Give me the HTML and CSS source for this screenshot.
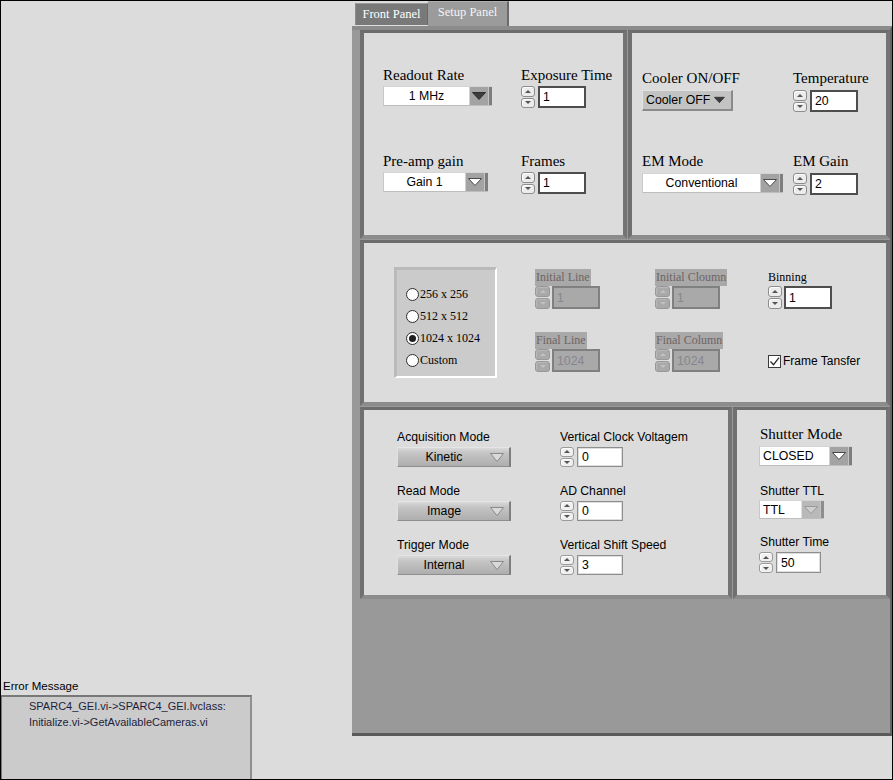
FILE: index.html
```html
<!DOCTYPE html>
<html>
<head>
<meta charset="utf-8">
<title>Setup Panel</title>
<link rel="stylesheet" href="styles.css">
</head>
<body>
<div class="window">
  <div class="left">
    <div class="err-label">Error Message</div>
    <div class="err-box">
      <div>SPARC4_GEI.vi-&gt;SPARC4_GEI.lvclass:</div>
      <div>Initialize.vi-&gt;GetAvailableCameras.vi</div>
    </div>
  </div>

  <div class="tabctl">
    <div class="tabs">
      <div class="tab tab-front">Front Panel</div>
      <div class="tab tab-setup">Setup Panel</div>
    </div>
    <div class="tabbody">
      <div class="prow row1">
        <section class="panel p1">
          <div class="field">
            <div class="lbl-serif">Readout Rate</div>
            <div class="ring w-rate"><span class="rv center">1 MHz</span><span class="rbtn"><svg width="14" height="8" viewBox="0 0 14 8"><path d="M0.5 0.5h13L7 7.5z" fill="#3c3c3c" stroke="#2c2c2c"/></svg></span></div>
          </div>
          <div class="field">
            <div class="lbl-serif">Exposure Time</div>
            <div class="num h22"><span class="spin"><i class="up"></i><i class="dn"></i></span><span class="nbox w48">1</span></div>
          </div>
          <div class="field">
            <div class="lbl-serif">Pre-amp gain</div>
            <div class="ring w-gain"><span class="rv center">Gain 1</span><span class="rbtn"><svg width="14" height="8" viewBox="0 0 14 8"><path d="M0.5 0.5h13L7 7.5z" fill="#fff" stroke="#4a4a4a"/></svg></span></div>
          </div>
          <div class="field">
            <div class="lbl-serif">Frames</div>
            <div class="num h22"><span class="spin"><i class="up"></i><i class="dn"></i></span><span class="nbox w48">1</span></div>
          </div>
        </section>
        <section class="panel p2">
          <div class="field">
            <div class="lbl-serif">Cooler ON/OFF</div>
            <div class="ring-grey"><span class="rv">Cooler OFF</span><svg width="14" height="8" viewBox="0 0 14 8"><path d="M0.5 0.5h13L7 7.5z" fill="#3c3c3c" stroke="#2c2c2c"/></svg></div>
          </div>
          <div class="field">
            <div class="lbl-serif">Temperature</div>
            <div class="num h22"><span class="spin"><i class="up"></i><i class="dn"></i></span><span class="nbox w48">20</span></div>
          </div>
          <div class="field">
            <div class="lbl-serif">EM Mode</div>
            <div class="ring w-em"><span class="rv center">Conventional</span><span class="rbtn"><svg width="14" height="8" viewBox="0 0 14 8"><path d="M0.5 0.5h13L7 7.5z" fill="#fff" stroke="#4a4a4a"/></svg></span></div>
          </div>
          <div class="field">
            <div class="lbl-serif">EM Gain</div>
            <div class="num h22"><span class="spin"><i class="up"></i><i class="dn"></i></span><span class="nbox w48">2</span></div>
          </div>
        </section>
      </div>

      <div class="prow row2">
        <section class="panel p3">
          <div class="radiobox">
            <div class="radio"><span class="rdot"></span>256 x 256</div>
            <div class="radio"><span class="rdot"></span>512 x 512</div>
            <div class="radio"><span class="rdot on"></span>1024 x 1024</div>
            <div class="radio"><span class="rdot"></span>Custom</div>
          </div>
          <div class="p3grid">
            <div class="dfield">
              <div class="dlabel">Initial Line</div>
              <div class="num dis h23"><span class="spin"><i class="up"></i><i class="dn"></i></span><span class="nbox w48">1</span></div>
            </div>
            <div class="dfield">
              <div class="dlabel">Initial Cloumn</div>
              <div class="num dis h23"><span class="spin"><i class="up"></i><i class="dn"></i></span><span class="nbox w48">1</span></div>
            </div>
            <div class="dfield">
              <div class="slabel">Binning</div>
              <div class="num h23 bin"><span class="spin"><i class="up"></i><i class="dn"></i></span><span class="nbox w48">1</span></div>
            </div>
            <div class="dfield">
              <div class="dlabel">Final Line</div>
              <div class="num dis h23"><span class="spin"><i class="up"></i><i class="dn"></i></span><span class="nbox w48">1024</span></div>
            </div>
            <div class="dfield">
              <div class="dlabel">Final Column</div>
              <div class="num dis h23"><span class="spin"><i class="up"></i><i class="dn"></i></span><span class="nbox w48">1024</span></div>
            </div>
            <div class="checkrow">
              <span class="cbox"><svg width="11" height="11" viewBox="0 0 11 11"><path d="M1.5 5.5l3 3.2 5.5-7" fill="none" stroke="#2a2a2a" stroke-width="1.3"/></svg></span>
              <span class="clabel">Frame Tansfer</span>
            </div>
          </div>
        </section>
      </div>

      <div class="prow row3">
        <section class="panel p4">
          <div class="field">
            <div class="lbl-sans">Acquisition Mode</div>
            <div class="sys"><span class="rv center">Kinetic</span><svg width="14" height="9" viewBox="0 0 14 9"><path d="M0.5 0.5h13L7 8.5z" fill="#d9d9d9" stroke="#8a8a8a"/></svg></div>
          </div>
          <div class="field">
            <div class="lbl-sans">Vertical Clock Voltagem</div>
            <div class="num sysnum h20"><span class="spin"><i class="up"></i><i class="dn"></i></span><span class="nbox w46">0</span></div>
          </div>
          <div class="field">
            <div class="lbl-sans">Read Mode</div>
            <div class="sys"><span class="rv center">Image</span><svg width="14" height="9" viewBox="0 0 14 9"><path d="M0.5 0.5h13L7 8.5z" fill="#d9d9d9" stroke="#8a8a8a"/></svg></div>
          </div>
          <div class="field">
            <div class="lbl-sans">AD Channel</div>
            <div class="num sysnum h20"><span class="spin"><i class="up"></i><i class="dn"></i></span><span class="nbox w46">0</span></div>
          </div>
          <div class="field">
            <div class="lbl-sans">Trigger Mode</div>
            <div class="sys"><span class="rv center">Internal</span><svg width="14" height="9" viewBox="0 0 14 9"><path d="M0.5 0.5h13L7 8.5z" fill="#d9d9d9" stroke="#8a8a8a"/></svg></div>
          </div>
          <div class="field">
            <div class="lbl-sans">Vertical Shift Speed</div>
            <div class="num sysnum h20"><span class="spin"><i class="up"></i><i class="dn"></i></span><span class="nbox w46">3</span></div>
          </div>
        </section>
        <section class="panel p5">
          <div class="field f-mode">
            <div class="lbl-serif">Shutter Mode</div>
            <div class="ring w-closed"><span class="rv">CLOSED</span><span class="rbtn"><svg width="14" height="8" viewBox="0 0 14 8"><path d="M0.5 0.5h13L7 7.5z" fill="#fff" stroke="#4a4a4a"/></svg></span></div>
          </div>
          <div class="field f-ttl">
            <div class="lbl-sans">Shutter TTL</div>
            <div class="ring w-ttl"><span class="rv">TTL</span><span class="rbtn light"><svg width="14" height="8" viewBox="0 0 14 8"><path d="M0.5 0.5h13L7 7.5z" fill="#cfcfcf" stroke="#9a9a9a"/></svg></span></div>
          </div>
          <div class="field">
            <div class="lbl-sans">Shutter Time</div>
            <div class="num sysnum h21"><span class="spin"><i class="up"></i><i class="dn"></i></span><span class="nbox w45">50</span></div>
          </div>
        </section>
      </div>
    </div>
  </div>
</div>
</body>
</html>
```

FILE: styles.css
```css
* { box-sizing: border-box; }
html, body { margin: 0; padding: 0; }
body { background: #dcdcdc; }

.window {
  width: 893px;
  height: 780px;
  border: 1px solid #000;
  background: #dcdcdc;
  display: flex;
  overflow: hidden;
  font-family: "Liberation Sans", Arial, sans-serif;
  color: #000;
}

/* ---------- left column / error message ---------- */
.left {
  width: 351px;
  display: flex;
  flex-direction: column;
  justify-content: flex-end;
}
.err-label {
  font-size: 11.5px;
  line-height: 14px;
  padding-left: 2px;
  margin-bottom: 2px;
}
.err-box {
  width: 251px;
  height: 84px;
  background: #cbcbcb;
  border-top: 2px solid #787878;
  border-left: 1px solid #787878;
  border-right: 2px solid #8f8f8f;
  padding: 1px 0 0 27px;
  font-size: 11px;
  line-height: 16px;
  color: #1e1e3c;
  white-space: nowrap;
}

/* ---------- tab control ---------- */
.tabctl {
  width: 540px;
  display: flex;
  flex-direction: column;
}
.tabs {
  height: 25px;
  display: flex;
  align-items: flex-end;
  padding-left: 3px;
}
.tab {
  font-family: "Liberation Serif", "Times New Roman", serif;
  font-size: 12.5px;
  display: flex;
  align-items: center;
  justify-content: center;
  white-space: nowrap;
}
.tab-front {
  width: 73px;
  height: 22px;
  margin-bottom: 1px;
  background: #797979;
  color: #fff;
  border-top: 1px solid #9c9c9c;
  border-left: 1px solid #8c8c8c;
  border-right: 1px solid #6a6a6a;
}
.tab-setup {
  width: 81px;
  height: 25px;
  background: #9b9b9b;
  color: #f4f4f4;
  border-top: 1px solid #b0b0b0;
  border-right: 2px solid #6a6a6a;
  padding-bottom: 4px;
}
.tabbody {
  height: 710px;
  background: #999;
  border-top: 4px solid #8b8b8b;
  border-right: 2px solid #666;
  border-bottom: 3px solid #5a5a5a;
  padding-left: 8px;
  display: flex;
  flex-direction: column;
  gap: 1px;
}

/* ---------- panels ---------- */
.prow { display: flex; gap: 1px; }
.row1 { height: 209px; }
.row2 { height: 166px; }
.row3 { height: 192px; }

.panel {
  background: #dcdcdc;
  border-top: 3px solid #6c6c6c;
  border-left: 4px solid #707070;
  border-right: 4px solid #747474;
  border-bottom: 4px solid #8c8c8c;
}
.p1 { width: 267px; }
.p2 { width: 262px; }
.p3 { width: 530px; }
.p4 { width: 372px; }
.p5 { width: 157px; }

.field {
  display: flex;
  flex-direction: column;
  align-items: flex-start;
  gap: 2px;
}
.lbl-serif {
  font-family: "Liberation Serif", "Times New Roman", serif;
  font-size: 15px;
  line-height: 17px;
  white-space: nowrap;
}
.lbl-sans {
  font-size: 12.2px;
  line-height: 15px;
  white-space: nowrap;
}

.p1 {
  display: grid;
  grid-template-columns: 138px auto;
  row-gap: 45px;
  align-content: start;
  padding: 34px 0 0 19px;
}
.p2 {
  display: grid;
  grid-template-columns: 151px auto;
  row-gap: 41px;
  align-content: start;
  padding: 37px 0 0 10px;
}
.p2 .field { gap: 3px; }

/* ---------- ring / combo controls ---------- */
.ring {
  display: flex;
  height: 20px;
  background: #fff;
  border-top: 1px solid #d4d4d4;
  border-left: 1px solid #c8c8c8;
  border-bottom: 1px solid #bdbdbd;
  font-size: 12.3px;
}
.rv {
  flex: 1;
  display: flex;
  align-items: center;
  padding-left: 3px;
  white-space: nowrap;
}
.rv.center { justify-content: center; padding-left: 0; }
.rbtn {
  width: 23px;
  display: flex;
  align-items: center;
  padding-left: 2px;
  background: #a3a3a3;
  border-left: 1px solid #d0d0d0;
  border-right: 3px solid #7e7e7e;
  box-shadow: inset -1px 0 0 #c4c4c4;
}
.rbtn.light {
  background: #b9b9b9;
  border-left-color: #e0e0e0;
  border-right-color: #8e8e8e;
}
.w-rate { width: 109px; }
.w-gain { width: 105px; }
.w-em { width: 141px; }
.w-closed { width: 93px; }
.w-ttl { width: 65px; height: 19px; }

.ring-grey {
  width: 91px;
  height: 21px;
  display: flex;
  align-items: center;
  gap: 4px;
  padding-right: 6px;
  background: #c3c3c3;
  border-top: 1px solid #e2e2e2;
  border-left: 1px solid #e2e2e2;
  border-bottom: 2px solid #8a8a8a;
  border-right: 2px solid #8a8a8a;
  font-size: 12.3px;
}

.sys {
  width: 114px;
  height: 20px;
  display: flex;
  align-items: center;
  padding-right: 5px;
  background: linear-gradient(#dadada 0, #c6c6c6 25%, #bcbcbc 55%, #aeaeae 100%);
  border-top: 1px solid #e6e6e6;
  border-left: 1px solid #e0e0e0;
  border-bottom: 1px solid #8e8e8e;
  border-right: 2px solid #7e7e7e;
  font-size: 12.3px;
}

/* ---------- numeric controls ---------- */
.num {
  display: flex;
  gap: 3px;
}
.h20 { height: 20px; }
.h21 { height: 21px; }
.h22 { height: 22px; }
.h23 { height: 23px; }
.spin {
  width: 14px;
  display: flex;
  flex-direction: column;
  gap: 1px;
}
.spin i {
  flex: 1;
  display: flex;
  align-items: center;
  justify-content: center;
  background: #ececec;
  border: 1px solid #8c8c8c;
  border-radius: 3px;
  box-shadow: inset 1px 1px 0 #fff;
}
.spin i::after {
  content: "";
  border-left: 3px solid transparent;
  border-right: 3px solid transparent;
}
.spin .up::after { border-bottom: 3px solid #555; }
.spin .dn::after { border-top: 3px solid #555; }
.nbox {
  display: flex;
  align-items: center;
  padding-left: 3px;
  background: #fff;
  border: 2px solid #4e4e4e;
  font-size: 12.3px;
}
.w45 { width: 45px; }
.w46 { width: 46px; }
.w48 { width: 48px; }

.sysnum .nbox {
  border: 1px solid #8e8e8e;
  box-shadow: inset 0 0 0 1px #dedede;
  padding-left: 4px;
}
.sysnum .spin i { background: #f0f0f0; border-color: #9a9a9a; }

.num.dis { gap: 2px; }
.num.dis .spin { width: 15px; }
.num.dis .spin i {
  background: #a9a9a9;
  border-color: #989898;
  box-shadow: inset 1px 1px 0 #b8b8b8;
}
.num.dis .spin .up::after { border-bottom-color: #c0c0c0; }
.num.dis .spin .dn::after { border-top-color: #c0c0c0; }
.num.dis .nbox {
  background: #a9a9a9;
  border-color: #808080;
  color: #86868f;
}
.num.bin { gap: 2px; }

/* ---------- middle panel ---------- */
.p3 {
  display: flex;
  align-items: flex-start;
  padding: 24px 0 0 30px;
}
.radiobox {
  width: 103px;
  height: 111px;
  background: #cbcbcb;
  border-style: solid;
  border-width: 3px 2px 2px 3px;
  border-color: #bababa #fff #fff #bababa;
  padding: 13px 0 0 9px;
  display: flex;
  flex-direction: column;
}
.radio {
  height: 22px;
  display: flex;
  align-items: center;
  gap: 1px;
  font-family: "Liberation Serif", "Times New Roman", serif;
  font-size: 12px;
  white-space: nowrap;
}
.rdot {
  width: 13px;
  height: 13px;
  border-radius: 50%;
  background: #fff;
  border: 1px solid #2e2e2e;
  display: flex;
  align-items: center;
  justify-content: center;
}
.rdot.on::after {
  content: "";
  width: 7px;
  height: 7px;
  border-radius: 50%;
  background: #1e1e1e;
}
.p3grid {
  display: grid;
  grid-template-columns: 120px 113px auto;
  row-gap: 23px;
  align-content: start;
  margin: 2px 0 0 38px;
}
.dfield {
  display: flex;
  flex-direction: column;
  align-items: flex-start;
}
.dlabel, .slabel {
  font-family: "Liberation Serif", "Times New Roman", serif;
  font-size: 12px;
  line-height: 17px;
  white-space: nowrap;
}
.dlabel {
  background: #a9a9a9;
  color: #6f6464;
  padding: 0 1px;
}
.checkrow {
  padding-top: 23px;
  display: flex;
  align-items: flex-start;
  gap: 2px;
}
.cbox {
  width: 13px;
  height: 13px;
  background: #fff;
  border: 1px solid #3a3a3a;
  display: flex;
}
.clabel {
  font-size: 12px;
  line-height: 13px;
  white-space: nowrap;
}

/* ---------- bottom panels ---------- */
.p4 {
  display: grid;
  grid-template-columns: 163px auto;
  row-gap: 17px;
  align-content: start;
  padding: 20px 0 0 33px;
}
.p5 {
  display: flex;
  flex-direction: column;
  padding: 16px 0 0 22px;
}
.p5 .f-mode { gap: 3px; margin-bottom: 18px; }
.p5 .f-ttl { gap: 1px; margin-bottom: 16px; }
.p5 .f-mode .lbl-serif { padding-left: 1px; }
.p5 .lbl-sans { padding-left: 1px; }
```
